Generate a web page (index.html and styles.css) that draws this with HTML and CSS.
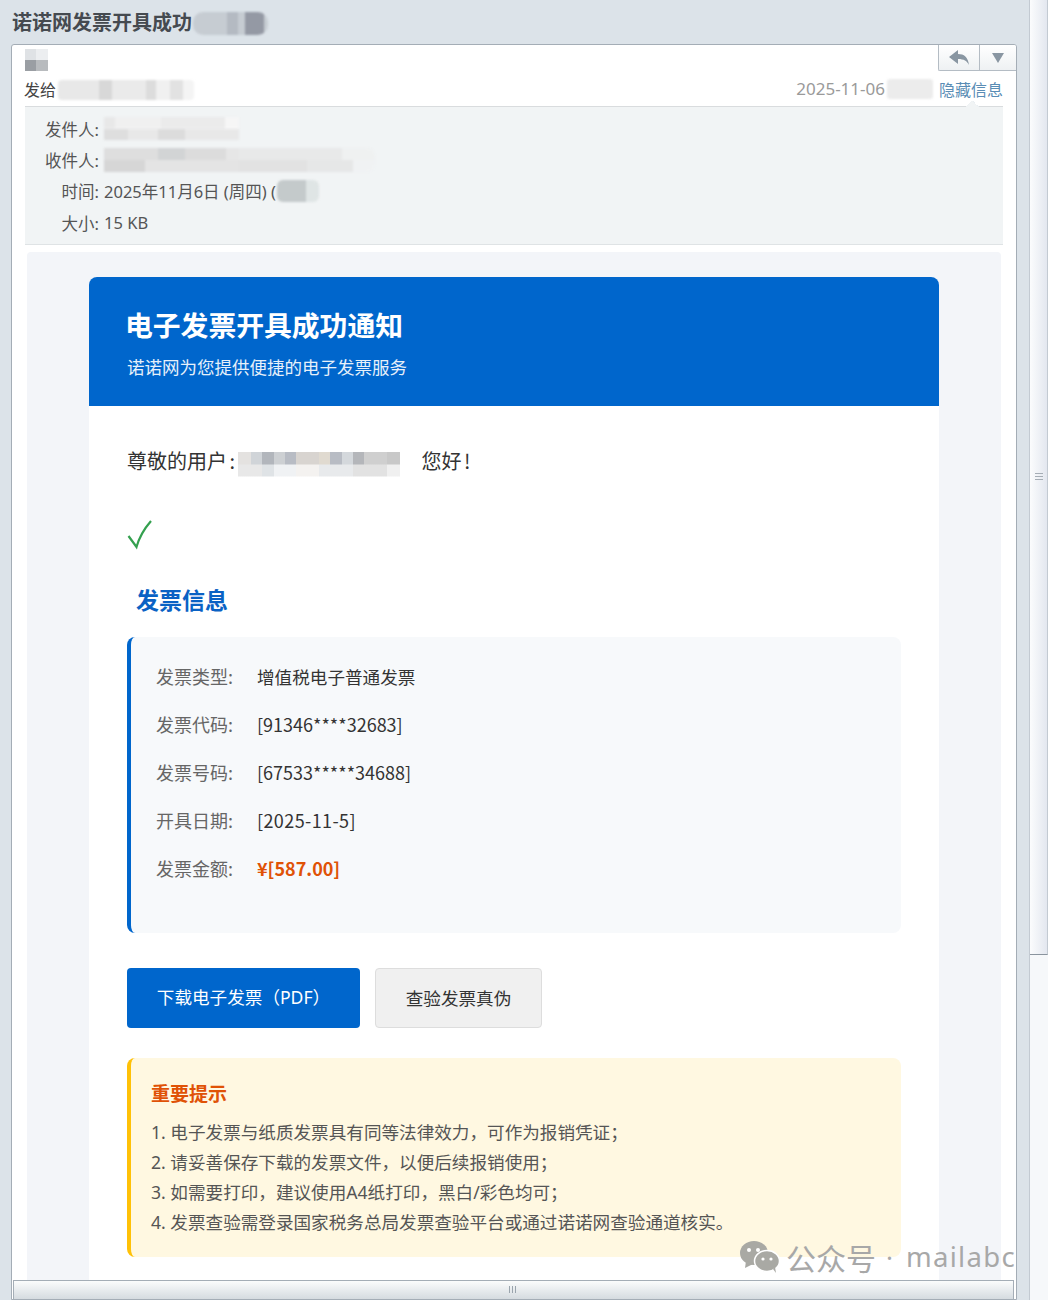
FILE: index.html
```html
<!DOCTYPE html>
<html lang="zh-CN">
<head>
<meta charset="utf-8">
<title>诺诺网发票开具成功</title>
<link rel="stylesheet" href="styles.css">
</head>
<body>
<div class="stage">
  <main class="mail-col">
    <h1 class="subject">诺诺网发票开具成功<span class="mask mask-subject"></span></h1>
    <section class="window">
      <div class="toolbar">
        <button class="tool tool-reply" aria-label="回复">
          <svg width="20" height="16" viewBox="0 0 20 16"><path d="M0 7 9 0v4c6 0 10 3 11 11-2-4-5-6-11-6v5z" fill="#8996a2"/></svg>
        </button>
        <button class="tool tool-more" aria-label="更多">
          <svg width="12" height="10" viewBox="0 0 12 10"><path d="M0 0h12L6 10z" fill="#8996a2"/></svg>
        </button>
      </div>
      <div class="avatar-row"><span class="mask mask-avatar"></span></div>
      <div class="summary">
        <span class="to">发给<span class="mask mask-to"></span></span>
        <span class="summary-right">
          <span class="date">2025-11-06</span><span class="mask mask-time"></span><a class="hide-link">隐藏信息</a>
        </span>
      </div>
      <dl class="details">
        <div class="detail-row"><dt>发件人:</dt><dd><span class="mask mask-from"></span></dd></div>
        <div class="detail-row"><dt>收件人:</dt><dd><span class="mask mask-rcpt"></span></dd></div>
        <div class="detail-row"><dt>时间:</dt><dd>2025年11月6日 (周四) (<span class="mask mask-clock"></span></dd></div>
        <div class="detail-row"><dt>大小:</dt><dd>15 KB</dd></div>
      </dl>
      <div class="body-area">
        <article class="email">
          <header class="email-head">
            <h2>电子发票开具成功通知</h2>
            <p>诺诺网为您提供便捷的电子发票服务</p>
          </header>
          <div class="email-body">
            <p class="greet">尊敬的用户 : <span class="mask mask-user"></span><span class="hello">您好 !</span></p>
            <div class="check">
              <svg width="26" height="30" viewBox="0 0 26 30"><path d="M1.5 16 9.500 27C12 18 17 9 24 1" fill="none" stroke="#34a04f" stroke-width="2.200"/></svg>
            </div>
            <h3 class="info-title">发票信息</h3>
            <div class="info-card">
              <div class="info-row"><span class="k">发票类型:</span><span class="v v-cn">增值税电子普通发票</span></div>
              <div class="info-row"><span class="k">发票代码:</span><span class="v">[91346****32683]</span></div>
              <div class="info-row"><span class="k">发票号码:</span><span class="v">[67533*****34688]</span></div>
              <div class="info-row"><span class="k">开具日期:</span><span class="v v-date">[2025-11-5]</span></div>
              <div class="info-row"><span class="k">发票金额:</span><span class="v amount">¥[587.00]</span></div>
            </div>
            <div class="actions">
              <a class="btn btn-primary">下载电子发票（PDF）</a>
              <a class="btn btn-plain">查验发票真伪</a>
            </div>
            <div class="notice">
              <h4>重要提示</h4>
              <p>1. 电子发票与纸质发票具有同等法律效力，可作为报销凭证；</p>
              <p>2. 请妥善保存下载的发票文件，以便后续报销使用；</p>
              <p>3. 如需要打印，建议使用A4纸打印，黑白/彩色均可；</p>
              <p>4. 发票查验需登录国家税务总局发票查验平台或通过诺诺网查验通道核实。</p>
            </div>
          </div>
        </article>
      </div>
      <div class="bottom-bar"><span class="grip"></span></div>
    </section>
  </main>
  <aside class="scrollbar">
    <div class="thumb"><span class="thumb-grip"></span></div>
  </aside>
  <div class="watermark">
    <svg class="wm-icon" width="40" height="32" viewBox="0 0 40 32"><ellipse cx="14" cy="12" rx="14" ry="12" fill="#a9a9a4"/><path d="M6 20l-1 7 8-4z" fill="#a9a9a4"/><ellipse cx="27" cy="20" rx="12.500" ry="10.500" fill="#a9a9a4" stroke="#fff" stroke-width="1.500"/><path d="M33 28l3 4-1-6z" fill="#a9a9a4"/><circle cx="9" cy="9" r="2" fill="#fff"/><circle cx="18" cy="9" r="2" fill="#fff"/><circle cx="23" cy="18" r="1.600" fill="#fff"/><circle cx="31" cy="18" r="1.600" fill="#fff"/></svg>
    <span class="wm-cn">公众号</span><span class="wm-dot">·</span><span class="wm-en">mailabc</span>
  </div>
</div>
</body>
</html>
```
FILE: styles.css
```css
* { box-sizing: border-box; }
html, body { margin: 0; padding: 0; }
body {
  width: 1048px;
  height: 1300px;
  overflow: hidden;
  background: #dce3e9;
  font-family: "Noto Sans", "Noto Sans CJK SC", sans-serif;
  color: #333;
}
.stage { position: relative; display: flex; width: 1048px; height: 1300px; overflow: hidden; }
.mail-col { width: 1029px; padding: 0 12px 0 11px; display: flex; flex-direction: column; }
.subject {
  margin: 0; height: 44px; padding: 10px 0 0 1px;
  font-size: 20px; line-height: 26px; font-weight: 700; color: #454a50;
  display: flex; align-items: flex-start; align-self: flex-start;
}
.mask { display: inline-block; filter: blur(.8px); }
.mask-subject {
  width: 75px; height: 23px; margin: 2px 0 0 1px; border-radius: 10px;
  background: linear-gradient(90deg, #c6ccd2 0 45%, #b4bac2 45% 60%, #c6ccd2 60% 70%, #9499a4 70% 95%, #c6ccd2 95%);
}
.window {
  position: relative; height: 1256px; overflow: hidden;
  background: #fff; border: 1px solid #a4adb6; border-radius: 3px 3px 0 0;
  padding: 0 13px;
}
.toolbar {
  position: absolute; top: 0; right: 0; display: flex; height: 26px;
  border-left: 1px solid #b4bcc4; border-bottom: 1px solid #b4bcc4;
  background: linear-gradient(#fff, #eef1f3); border-bottom-left-radius: 2px;
}
.tool { border: 0; padding: 0; background: transparent; display: flex; align-items: center; justify-content: center; height: 25px; }
.tool-reply { width: 41px; border-right: 1px solid #b4bcc4; }
.tool-more { width: 36px; }
.avatar-row { height: 27px; padding-top: 4px; }
.mask-avatar {
  display: block; width: 23px; height: 22px; filter: none;
  background:
    linear-gradient(90deg, #dfe2e5 50%, #eceef0 50%) top/100% 50% no-repeat,
    linear-gradient(90deg, #9a9ea3 50%, #b8bbbe 50%) bottom/100% 50% no-repeat;
}
.summary {
  display: flex; justify-content: space-between; align-items: center;
  height: 35px; padding-bottom: 1px; border-bottom: 1px solid #d9dcde;
  font-size: 16px; line-height: 24px; position: relative;
  font-family: "Noto Sans CJK SC", sans-serif;
}
.summary::after {
  content: ""; position: absolute; right: 24px; bottom: -1px; width: 14px; height: 7px;
  background: linear-gradient(135deg, transparent 50%, #e9eef2 50%, #f1f4f5 60%) left/50% 100% no-repeat,
    linear-gradient(225deg, transparent 50%, #e9eef2 50%, #f1f4f5 60%) right/50% 100% no-repeat;
}
.to { display: flex; align-items: center; color: #444; margin-left: -1px; }
.mask-to {
  width: 136px; height: 20px; margin: 2px 0 0 2px; border-radius: 4px;
  background: linear-gradient(90deg, #e8e8e8 0 30%, #d8d8d8 30% 40%, #eaeaea 40% 65%, #dcdcdc 65% 72%, #f0f0f0 72% 82%, #e2e2e2 82% 92%, #f4f4f4 92%);
}
.summary-right { display: flex; align-items: center; }
.date { color: #9a9a9a; font-family: "Noto Sans", sans-serif; font-size: 17px; margin-top: 1px; }
.mask-time { width: 46px; height: 20px; margin: 0 6px 0 2px; background: #ececec; border-radius: 3px; }
.hide-link { color: #5a8db5; }
.details {
  margin: 0; height: 138px; padding: 6px 0 0 0;
  background: #f1f4f5; border-bottom: 1px solid #dfe3e5;
  font-size: 16.500px; color: #555;
}
.detail-row { display: flex; height: 31.300px; align-items: center; margin: 0; }
.detail-row dt { width: 74px; text-align: right; flex: none; }
.detail-row dd { margin: 0 0 0 5px; display: flex; align-items: center; white-space: pre; }
.mask-from {
  width: 135px; height: 23px;
  background:
    linear-gradient(90deg, #e8e8e8 0 8%, #f0f0f0 8% 42%, #ebebeb 42% 90%, #f6f6f6 90%) top/100% 50% no-repeat,
    linear-gradient(90deg, #dedede 0 18%, #e8e8e8 18% 40%, #dcdcdc 40% 60%, #e8e8e8 60% 100%) bottom/100% 50% no-repeat;
}
.mask-rcpt {
  width: 271px; height: 24px; border-radius: 0 8px 8px 0;
  background:
    linear-gradient(90deg, #dedede 0 20%, #d2d4d5 20% 30%, #dcdcdc 30% 45%, #e6e6e6 45% 50%, #e8e9e9 50% 88%, #eff1f1 88%) top/100% 50% no-repeat,
    linear-gradient(90deg, #d6d6d6 0 15%, #e4e4e4 15% 50%, #e2e2e2 50% 75%, #e6e7e7 75% 92%, #f0f2f3 92%) bottom/100% 50% no-repeat;
}
.mask-clock { width: 42px; height: 22px; border-radius: 6px; background: linear-gradient(90deg, #c4cacb 0 70%, #dfe5e5 70%); margin-left: 1px; }
.body-area {
  margin: 7px 2px 0 2px; height: 1032px; overflow: hidden; padding: 25px 62px 0 62px;
  background: #f3f5f9; border-radius: 4px 4px 0 0; width: 974px;
  position: relative;
}
.email { background: #fff; border-radius: 8px 8px 0 0; width: 850px; height: 1100px; }
.email-head { height: 129px; background: #0066cc; color: #fff; padding: 29px 38px 0; border-radius: 8px 8px 0 0; }
.email-head h2 { margin: 0 0 0 -2px; font-size: 27.800px; line-height: 38px; font-weight: 700; }
.email-head p { margin: 10px 0 0; font-size: 17.500px; line-height: 26px; color: #e6f0fa; }
.email-body { padding: 39px 38px 0; }
.greet { margin: 0; height: 32px; display: flex; align-items: center; font-size: 20px; line-height: 30px; color: #333; white-space: pre; word-spacing: -2px; font-family: "Noto Sans CJK SC", sans-serif; }
.mask-user {
  width: 162px; height: 25px; margin: 6px 22px 0 0; filter: blur(.6px);
  background:
    linear-gradient(90deg, #e4e2e0 0 8%, #d0d4d8 8% 15%, #b2b6bc 15% 22%, #cdd0d3 22% 29%, #b8bcc4 29% 36%, #d8d4d0 36% 50%, #e0dad0 50% 57%, #b8bcc4 57% 64%, #d4d8dc 64% 71%, #b4b6ba 71% 78%, #cfcfcf 78% 92%, #c8c8c8 92%) top/100% 50% no-repeat,
    linear-gradient(90deg, #e8e8e8 0 15%, #dfe3e6 15% 22%, #f0f2f4 22% 36%, #f4f2f0 36% 50%, #e8eaec 50% 71%, #e2e2e2 71% 92%, #f0f0f0 92%) bottom/100% 50% no-repeat;
}
.hello { color: #333; }
.check { margin-top: 41px; height: 34px; padding-top: 2px; }
.info-title { margin: 31px 0 0 9px; height: 34px; font-size: 23px; line-height: 34px; font-weight: 700; color: #0a62c4; }
.info-card {
  margin-top: 20px; height: 296px; padding: 15px 0 0 25px;
  background: #f7f9fb; border-left: 4px solid #0066cc; border-radius: 8px;
}
.info-row { display: flex; height: 48px; align-items: center; font-size: 18px; font-family: "Noto Sans CJK SC", sans-serif; }
.k { width: 101px; color: #666; flex: none; }
.v { color: #333; }
.v-cn { font-size: 17.600px; }
.v-date { letter-spacing: .4px; }
.amount { color: #e05206; font-weight: 700; }
.actions { margin-top: 35px; display: flex; gap: 15px; }
.btn { display: flex; align-items: center; justify-content: center; height: 60px; font-size: 17.600px; border-radius: 4px; }
.btn-primary { width: 233px; background: #0066cc; color: #fff; padding-bottom: 3px; }
.btn-plain { width: 167px; background: #f0f0f0; color: #333; border: 1px solid #dddddd; padding-bottom: 2px; }
.notice {
  margin-top: 30px; height: 199px; padding: 21px 0 0 20px;
  background: #fff8e1; border-left: 4px solid #ffc107; border-radius: 8px;
}
.notice h4 { margin: 0 0 8px; font-size: 19px; line-height: 30px; font-weight: 700; color: #e05206; }
.notice p { margin: 0; font-size: 17.600px; line-height: 30px; color: #555; }
.bottom-bar {
  position: absolute; left: 1px; right: 2px; bottom: 0; height: 19px;
  background: linear-gradient(#fbfcfc, #d5dbe0); border: 1px solid #a4adb6; border-bottom: 0;
  display: flex; justify-content: center; padding-top: 5px;
}
.grip { width: 9px; height: 7px; background: repeating-linear-gradient(90deg, #9aa4ad 0 1px, transparent 1px 3px); }
.scrollbar { width: 19px; height: 1300px; background: #f6f8fa; border-left: 1px solid #c3cad2; }
.thumb {
  height: 955px; border-right: 1px solid #c3cad2; border-bottom: 1px solid #8a949e;
  background: linear-gradient(90deg, #fbfcfd, #e3e7ef);
  display: flex; align-items: center; justify-content: center;
}
.thumb-grip { width: 8px; height: 8px; background: repeating-linear-gradient(#a5adb5 0 1px, transparent 1px 3px); }
.watermark {
  position: absolute; left: 740px; top: 1240px; display: flex; align-items: center;
  color: #a8a8a8; white-space: nowrap;
}
.wm-icon { flex: none; margin-right: 6px; }
.wm-cn { font-family: "Noto Sans CJK SC", sans-serif; font-size: 30px; line-height: 34px; }
.wm-dot { font-size: 26px; line-height: 34px; margin: 0 13px 0 10px; }
.wm-en { font-family: "Noto Sans", sans-serif; font-size: 27.500px; line-height: 34px; letter-spacing: 1.300px; }
```
